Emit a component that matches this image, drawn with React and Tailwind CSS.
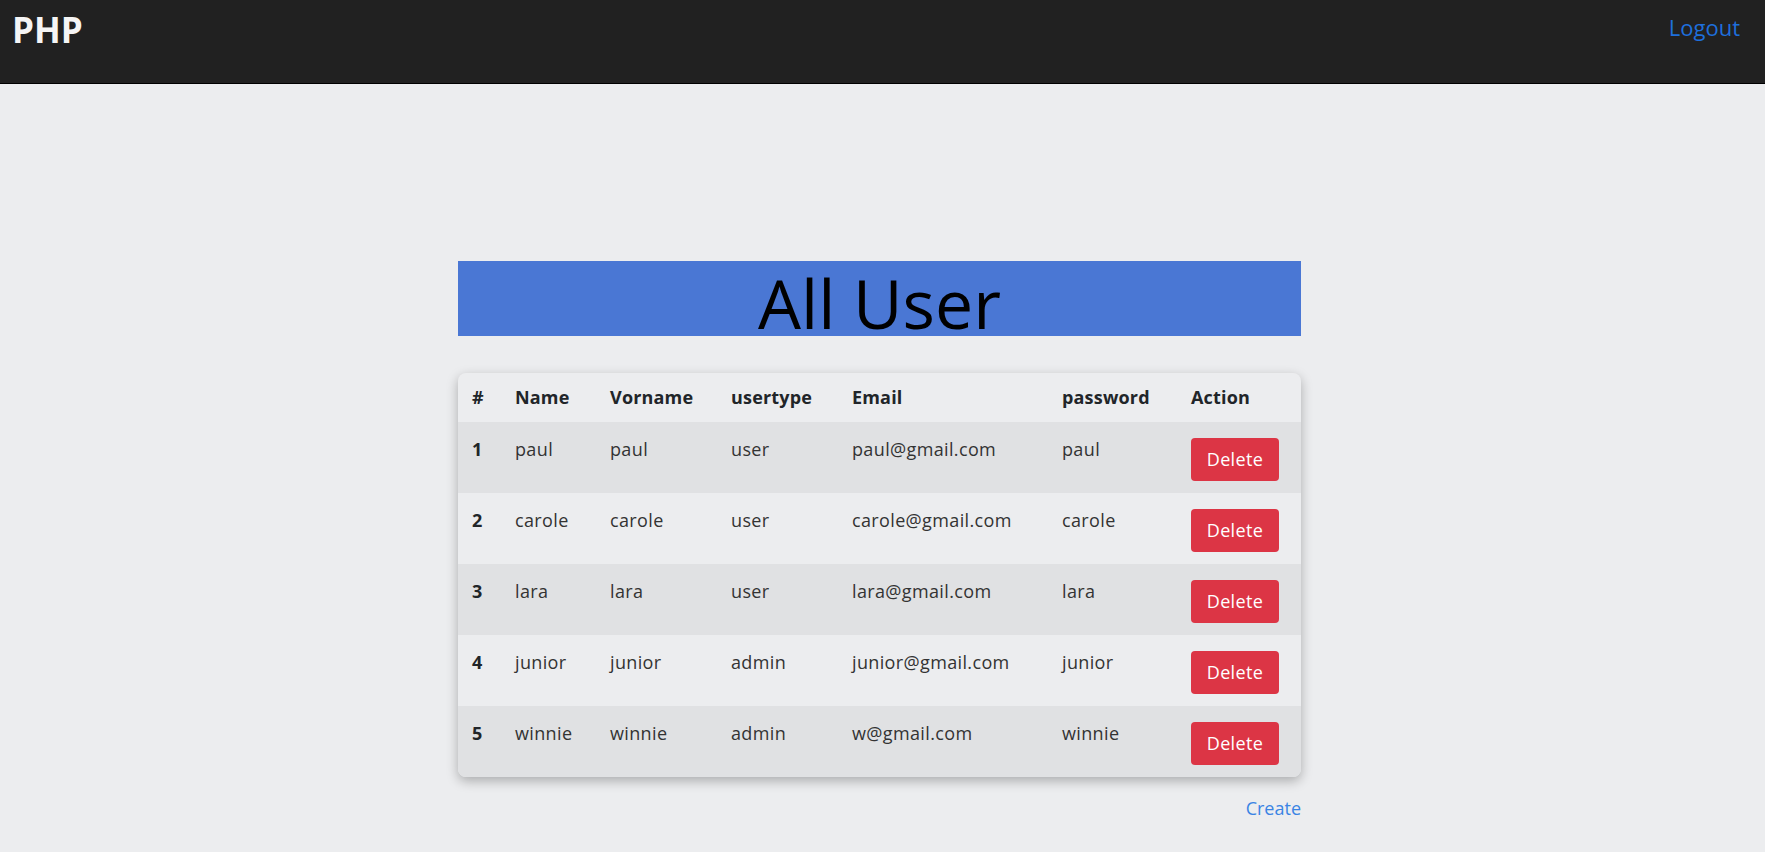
import React from 'react';

const users = [
  { id: 1, name: 'paul', vorname: 'paul', usertype: 'user', email: 'paul@gmail.com', password: 'paul' },
  { id: 2, name: 'carole', vorname: 'carole', usertype: 'user', email: 'carole@gmail.com', password: 'carole' },
  { id: 3, name: 'lara', vorname: 'lara', usertype: 'user', email: 'lara@gmail.com', password: 'lara' },
  { id: 4, name: 'junior', vorname: 'junior', usertype: 'admin', email: 'junior@gmail.com', password: 'junior' },
  { id: 5, name: 'winnie', vorname: 'winnie', usertype: 'admin', email: 'w@gmail.com', password: 'winnie' },
];

const cols = 'grid grid-cols-[43px_95px_121px_121px_210px_129px_1fr] pl-[14px]';

const App = () => {
  return (
    <div className="min-h-screen bg-[#ecedef] font-['Open_Sans',sans-serif] text-[#212529]">
      {/* Navbar */}
      <div className="h-[84px] bg-[#212121] border-b border-black flex items-start justify-between">
        <div className="pl-[12px] pt-[6px] text-[35px] leading-[48px] font-bold text-[#f5f5f5]">PHP</div>
        <a href="#" className="pr-[25px] pt-[12px] text-[22px] leading-[30px] text-[#1e6fdc]">Logout</a>
      </div>

      <div className="flex justify-center pr-[6px]">
        <div className="w-[843px] pt-[177px] pb-[40px]">
          {/* Title */}
          <h1 className="h-[75px] bg-[#4a77d4] text-center text-[68px] leading-[75px] font-normal text-black pt-[4px]">
            All User
          </h1>

          {/* Table */}
          <div className="mt-[37px] rounded-lg overflow-hidden bg-[#ecedef] shadow-[0_4px_12px_rgba(0,0,0,0.28)]">
            <div className={`${cols} py-[11px] text-[18px] leading-[27px] font-bold tracking-[0.01em]`}>
              <div>#</div>
              <div>Name</div>
              <div>Vorname</div>
              <div>usertype</div>
              <div>Email</div>
              <div>password</div>
              <div>Action</div>
            </div>
            {users.map((u, i) => (
              <div
                key={u.id}
                className={`${cols} pt-[14px] pb-[12px] text-[18px] leading-[27px] tracking-[0.02em] ${
                  i % 2 === 0 ? 'bg-[#e0e1e3]' : 'bg-[#ecedef]'
                }`}
              >
                <div className="font-bold">{u.id}</div>
                <div className="text-[#333]">{u.name}</div>
                <div className="text-[#333]">{u.vorname}</div>
                <div className="text-[#333]">{u.usertype}</div>
                <div className="text-[#333]">{u.email}</div>
                <div className="text-[#333]">{u.password}</div>
                <div>
                  <button className="mt-[2px] h-[43px] w-[88px] rounded bg-[#dc3545] text-white text-[18px] tracking-[0.02em]">
                    Delete
                  </button>
                </div>
              </div>
            ))}
          </div>

          <div className="mt-[18px] text-right">
            <a href="#" className="text-[18px] leading-[27px] text-[#3a84e4]">Create</a>
          </div>
        </div>
      </div>
    </div>
  );
};

export default App;
